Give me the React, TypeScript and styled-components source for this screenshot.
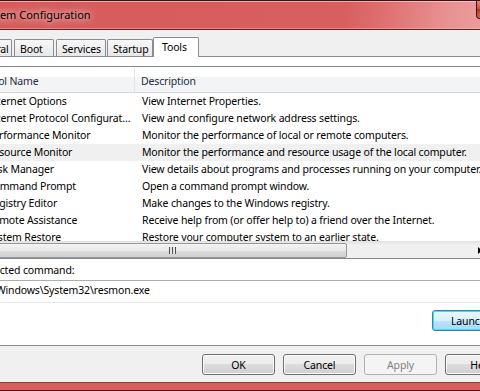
import React from "react";
import styled, { createGlobalStyle } from "styled-components";

const GlobalStyle = createGlobalStyle`
  html, body {
    margin: 0;
    padding: 0;
    overflow: hidden;
    background: #f0f0f0;
  }
  body {
    font-family: "Noto Sans", "Open Sans", sans-serif;
    font-size: 10.5px;
    letter-spacing: -0.15px;
    color: #000;
  }
`;

const Window = styled.div`
  width: 578px;
  height: 391px;
  margin-left: -48px;
  display: flex;
  flex-direction: column;
  overflow: hidden;
`;

const TitleBar = styled.div`
  height: 30px;
  box-sizing: border-box;
  display: flex;
  align-items: flex-start;
  border-top: 1px solid #3e1212;
  border-bottom: 1px solid #5e2424;
  background: linear-gradient(100deg, #d65b5b 0%, #d85f5f 68%, #e07474 76%, #e99393 86%, #eda6a6 100%);
  box-shadow: inset 0 1px 0 rgba(255, 220, 220, 0.6), inset 0 -1px 0 rgba(255, 200, 200, 0.4);
`;

const Title = styled.div`
  padding-left: 27px;
  line-height: 28px;
  font-size: 11px;
  letter-spacing: 0;
  color: #000;
  text-shadow: 0 0 6px rgba(255, 235, 235, 0.9), 0 0 12px rgba(255, 235, 235, 0.7);
`;

const CloseButton = styled.div`
  margin-left: auto;
  margin-right: 9px;
  width: 43px;
  height: 17px;
  border: 1px solid #3a0e0e;
  border-top: none;
  border-radius: 0 0 4px 4px;
  background: linear-gradient(#e08a7a, #c74a3a 50%, #b8321f 50%, #d0705a);
`;

const Body = styled.div`
  flex: 1;
  background: #f0f0f0;
  padding: 7px 12px 0 4px;
  display: flex;
  flex-direction: column;
`;

const TabRow = styled.div`
  display: flex;
  align-items: flex-end;
  height: 19px;
  margin-left: 9px;
  position: relative;
  z-index: 1;
`;

const Tab = styled.div<{ $w: number; $gap: number; $active?: boolean }>`
  box-sizing: border-box;
  width: ${(p) => p.$w}px;
  margin-right: ${(p) => p.$gap}px;
  height: ${(p) => (p.$active ? 20 : 17)}px;
  margin-bottom: ${(p) => (p.$active ? -1 : 0)}px;
  padding-left: ${(p) => (p.$active ? 8 : 5)}px;
  padding-top: 2px;
  line-height: 15px;
  border: 1px solid #898c95;
  border-bottom: none;
  border-radius: 2px 2px 0 0;
  background: ${(p) => (p.$active ? "#fff" : "linear-gradient(#f7f7f7, #e8e8e8)")};
  white-space: nowrap;
`;

const Panel = styled.div`
  box-sizing: border-box;
  height: 290px;
  margin-left: 4px;
  border: 1px solid #898c95;
  background: #fff;
  padding: 9px 0 0 19px;
  display: flex;
  flex-direction: column;
`;

const ListView = styled.div`
  margin-right: 28px;
  border: 1px solid #828790;
  display: flex;
  flex-direction: column;
  overflow: hidden;
`;

const Columns = styled.div`
  display: grid;
  grid-template-columns: 154px 1fr;
`;

const HeaderRow = styled(Columns)`
  height: 26px;
  box-sizing: border-box;
  border-bottom: 1px solid #d5d5d5;
  background: linear-gradient(#ffffff 0%, #ffffff 42%, #f3f4f6 42%, #f3f4f6 100%);
  color: #1e2d44;
`;

const HeaderCell = styled.div<{ $sep?: boolean }>`
  padding: 3px 0 0 6px;
  line-height: 22px;
  white-space: nowrap;
  border-right: ${(p) => (p.$sep ? "1px solid #e2e5ea" : "none")};
`;

const Rows = styled.div`
  height: 148px;
  overflow: hidden;
`;

const Row = styled(Columns)<{ $hot?: boolean }>`
  height: 17px;
  line-height: 17px;
  background: ${(p) => (p.$hot ? "#f0f0f0" : "transparent")};
`;

const Cell = styled.div`
  padding-left: 6px;
  white-space: nowrap;
  overflow: hidden;
`;

const DescCell = styled(Cell)`
  padding-left: 7px;
`;

const HScroll = styled.div`
  height: 17px;
  display: flex;
  align-items: center;
  background: linear-gradient(#e6e6e6, #f0f0f0 20%, #f0f0f0);
  border-top: 1px solid #e3e3e3;
  box-sizing: border-box;
`;

const ScrollArrow = styled.div`
  width: 17px;
  height: 17px;
  display: flex;
  align-items: center;
  justify-content: center;
  flex-shrink: 0;
`;

const Thumb = styled.div`
  width: 349px;
  height: 15px;
  box-sizing: border-box;
  border: 1px solid #979797;
  border-radius: 2px;
  background: linear-gradient(#f4f4f4, #e8e8e8 50%, #dadada 50%, #d2d2d2);
  display: flex;
  align-items: center;
  justify-content: center;
`;

const Grip = styled.div`
  width: 7px;
  height: 7px;
  background: repeating-linear-gradient(90deg, #4f4f4f 0 1px, #e4e4e4 1px 3px);
`;

const Track = styled.div`
  flex: 1;
`;

const FieldLabel = styled.div`
  margin-top: 4px;
  line-height: 15px;
  height: 15px;
  white-space: nowrap;
`;

const CommandBox = styled.div`
  margin-top: 2px;
  margin-right: 28px;
  height: 23px;
  box-sizing: border-box;
  padding-left: 2px;
  line-height: 19px;
  border: 1px solid #dbdfe6;
  border-top-color: #abadb3;
  border-bottom-color: #e3e9ef;
  white-space: nowrap;
`;

const LaunchRow = styled.div`
  display: flex;
  justify-content: flex-end;
  margin-top: 7px;
  margin-right: 12px;
`;

const Button = styled.div<{ $default?: boolean; $disabled?: boolean }>`
  width: 73px;
  height: 21px;
  box-sizing: border-box;
  border: 1px solid ${(p) => (p.$default ? "#3c7fb1" : p.$disabled ? "#adb2b5" : "#707070")};
  border-radius: 3px;
  display: flex;
  align-items: center;
  justify-content: center;
  color: ${(p) => (p.$disabled ? "#838383" : "#000")};
  background: ${(p) =>
    p.$disabled
      ? "#f4f4f4"
      : p.$default
      ? "linear-gradient(#eaf6fd, #d9f0fc 50%, #bee6fd 50%, #a7d9f5)"
      : "linear-gradient(#f2f2f2, #ebebeb 50%, #dddddd 50%, #cfcfcf)"};
  box-shadow: ${(p) => (p.$default ? "inset 0 0 0 1px #48d8fb" : p.$disabled ? "none" : "inset 0 0 0 1px #fcfcfc")};
`;

const ButtonRow = styled.div`
  display: flex;
  justify-content: flex-end;
  gap: 8px;
  margin-top: 8px;
`;

const BottomFrame = styled.div`
  height: 9px;
  box-sizing: border-box;
  border-top: 1px solid #8a3a3a;
  border-bottom: 1px solid #4a1616;
  background: #d85f5f;
`;

const tabs = [
  { label: "General", w: 47, gap: 2 },
  { label: "Boot", w: 40, gap: 2 },
  { label: "Services", w: 50, gap: 1 },
  { label: "Startup", w: 46, gap: 0 },
  { label: "Tools", w: 46, gap: 0, active: true },
];

const tools = [
  ["Internet Options", "View Internet Properties."],
  ["Internet Protocol Configurat…", "View and configure network address settings."],
  ["Performance Monitor", "Monitor the performance of local or remote computers."],
  ["Resource Monitor", "Monitor the performance and resource usage of the local computer."],
  ["Task Manager", "View details about programs and processes running on your computer."],
  ["Command Prompt", "Open a command prompt window."],
  ["Registry Editor", "Make changes to the Windows registry."],
  ["Remote Assistance", "Receive help from (or offer help to) a friend over the Internet."],
  ["System Restore", "Restore your computer system to an earlier state."],
];

export default function App() {
  return (
    <>
      <GlobalStyle />
      <Window>
        <TitleBar>
          <Title>System Configuration</Title>
          <CloseButton />
        </TitleBar>
        <Body>
          <TabRow>
            {tabs.map((t) => (
              <Tab key={t.label} $w={t.w} $gap={t.gap} $active={t.active}>
                {t.label}
              </Tab>
            ))}
          </TabRow>
          <Panel>
            <ListView>
              <HeaderRow>
                <HeaderCell $sep>Tool Name</HeaderCell>
                <HeaderCell>Description</HeaderCell>
              </HeaderRow>
              <Rows>
                {tools.map(([name, desc], i) => (
                  <Row key={name} $hot={i === 3}>
                    <Cell>{name}</Cell>
                    <DescCell>{desc}</DescCell>
                  </Row>
                ))}
              </Rows>
              <HScroll>
                <ScrollArrow>
                  <svg width="4" height="7" viewBox="0 0 4 7">
                    <path d="M4 0 L0 3.5 L4 7 Z" fill="#000" />
                  </svg>
                </ScrollArrow>
                <Thumb>
                  <Grip />
                </Thumb>
                <Track />
                <ScrollArrow>
                  <svg width="4" height="7" viewBox="0 0 4 7">
                    <path d="M0 0 L4 3.5 L0 7 Z" fill="#000" />
                  </svg>
                </ScrollArrow>
              </HScroll>
            </ListView>
            <FieldLabel>Selected command:</FieldLabel>
            <CommandBox>C:\Windows\System32\resmon.exe</CommandBox>
            <LaunchRow>
              <Button $default>Launch</Button>
            </LaunchRow>
          </Panel>
          <ButtonRow>
            <Button>OK</Button>
            <Button>Cancel</Button>
            <Button $disabled>Apply</Button>
            <Button>Help</Button>
          </ButtonRow>
        </Body>
        <BottomFrame />
      </Window>
    </>
  );
}
